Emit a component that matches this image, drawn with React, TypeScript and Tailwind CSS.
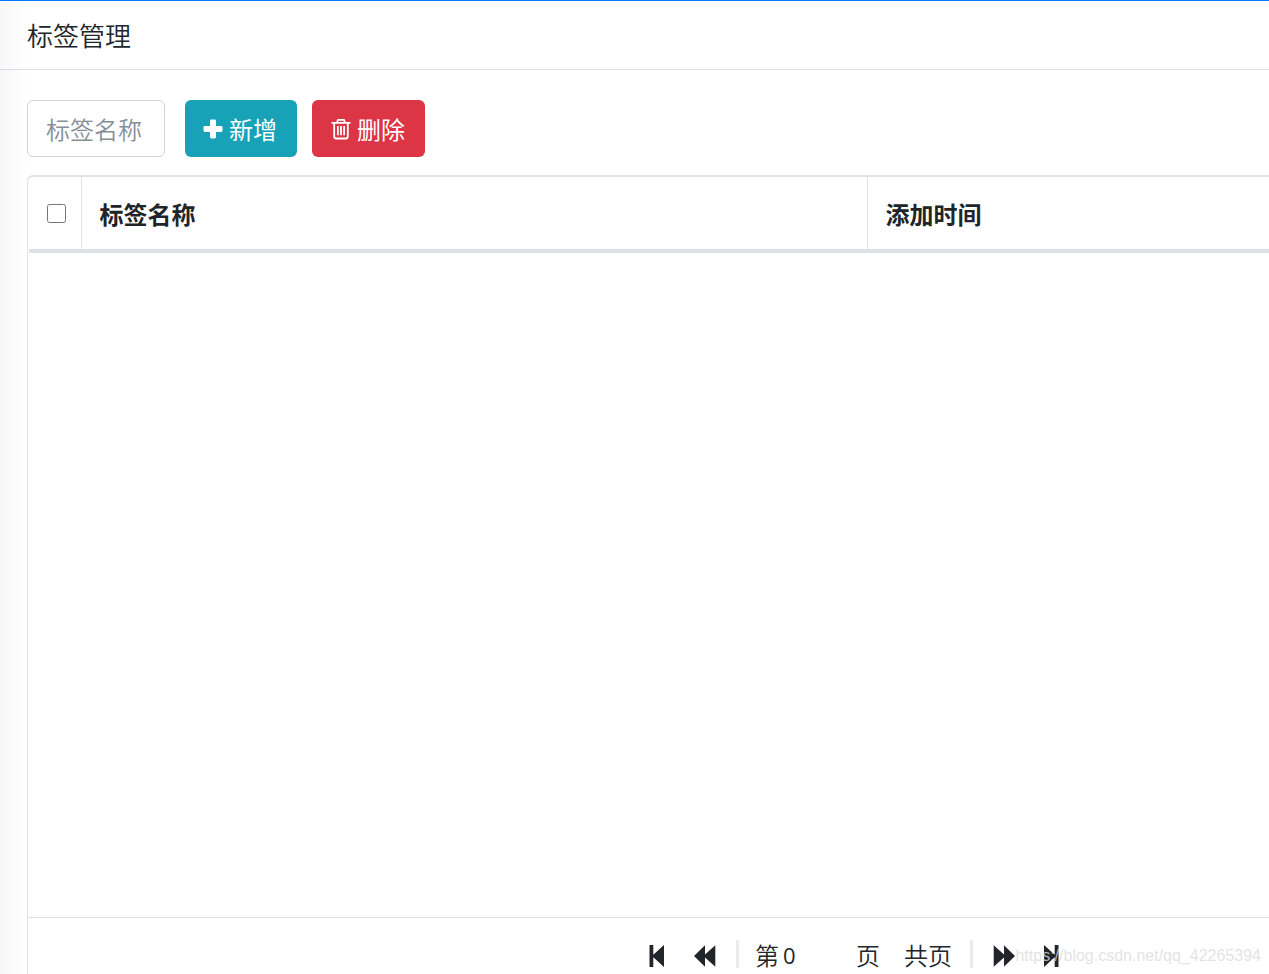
import React, { useState } from 'react';

const StepIcon: React.FC<{ flip?: boolean }> = ({ flip }) => (
  <svg width="16" height="22" viewBox="0 0 16 22" fill="currentColor" className={flip ? 'rotate-180' : ''}>
    <path d="M0.5 0h3.8v9.8L15 0v22L4.3 12.2V22H0.5z" />
  </svg>
);

const FastIcon: React.FC<{ flip?: boolean }> = ({ flip }) => (
  <svg width="22" height="22" viewBox="0 0 22 22" fill="currentColor" className={flip ? 'rotate-180' : ''}>
    <path d="M0 11 11 0.3v9.3L21.3 0.3v21.4L11 12.4v9.3z" />
  </svg>
);

const PlusIcon = () => (
  <svg width="20" height="20" viewBox="0 0 20 20" fill="currentColor">
    <path d="M8.4 0.5h3.2a1.4 1.4 0 0 1 1.4 1.4V7h5.1a1.4 1.4 0 0 1 1.4 1.4v3.2a1.4 1.4 0 0 1-1.4 1.4H13v5.1a1.4 1.4 0 0 1-1.4 1.4H8.4A1.4 1.4 0 0 1 7 18.1V13H1.9a1.4 1.4 0 0 1-1.4-1.4V8.4A1.4 1.4 0 0 1 1.9 7H7V1.9A1.4 1.4 0 0 1 8.4 0.5z" />
  </svg>
);

const TrashIcon = () => (
  <svg width="20" height="22" viewBox="0 0 20 22" fill="none" stroke="currentColor" strokeWidth="1.8">
    <path d="M0.5 4.9h19M6 4.5 7 1.8h6l1 2.7M3.2 5v13.2q0 2.3 2 2.3h9.6q2 0 2-2.3V5M6.9 8v9.3M10 8v9.3M13.1 8v9.3" />
  </svg>
);

const App: React.FC = () => {
  const [keyword, setKeyword] = useState('');
  const [page, setPage] = useState('0');
  const [checked, setChecked] = useState(false);

  return (
    <div className="relative flex h-screen flex-col overflow-hidden border-t border-[#007bff] bg-white font-['Noto_Sans','Noto_Sans_CJK_SC',sans-serif] text-2xl text-[#212529]">
      <div className="pointer-events-none absolute inset-y-0 left-0 w-7 bg-linear-to-r from-black/3 to-transparent" />

      <header className="border-b border-[#dee2e6] px-[27px] pt-[17px] pb-[15px]">
        <h1 className="text-[26px] leading-9 font-[350]">标签管理</h1>
      </header>

      <main className="flex flex-1 flex-col pt-[30px] pl-[27px]">
        <div className="mb-[18px] flex items-center">
          <input
            type="text"
            aria-label="标签名称"
            placeholder="标签名称"
            value={keyword}
            onChange={(e) => setKeyword(e.target.value)}
            className="mr-5 h-[57px] w-[138px] rounded-md border border-[#ced4da] px-[18px] pt-0.5 font-[350] placeholder:text-[#868e96]"
          />
          <button className="mr-[15px] flex h-[57px] items-center gap-[6px] rounded-md bg-[#17a2b8] pr-5 pl-[18px] text-white">
            <PlusIcon />
            <span className="pt-0.5">新增</span>
          </button>
          <button className="flex h-[57px] items-center gap-[6px] rounded-md bg-[#dc3545] pr-5 pl-[19px] text-white">
            <TrashIcon />
            <span className="pt-0.5">删除</span>
          </button>
        </div>

        {/* The grid is wider than the view and runs off its right side */}
        <section className="flex w-[133%] flex-1 flex-col rounded-t-md border-t-2 border-l border-[#dee2e6] pl-px">
          <table className="w-full table-fixed">
            <thead>
              <tr className="h-[74px] border-b-4 border-[#dee2e6] text-left">
                <th className="w-[52px] border-r border-[#dee2e6] pl-[18px]">
                  <input
                    type="checkbox"
                    aria-label="全选"
                    checked={checked}
                    onChange={(e) => setChecked(e.target.checked)}
                    className="block size-[19px]"
                  />
                </th>
                <th className="w-[786px] border-r border-[#dee2e6] px-[18px] pt-1 font-bold">标签名称</th>
                <th className="px-[18px] pt-1 font-bold">添加时间</th>
              </tr>
            </thead>
            <tbody />
          </table>
          <div className="flex-1" />
          <nav className="flex h-[57px] items-center justify-center border-t border-[#dddddd] pt-5 font-[350]">
            <button aria-label="首页" className="mr-[29px]">
              <StepIcon />
            </button>
            <button aria-label="上一页" className="mr-5">
              <FastIcon />
            </button>
            <span className="mb-1 h-7 w-[3px] bg-[#ebebeb]" />
            <label className="ml-4 flex items-center gap-1">
              第
              <input
                value={page}
                onChange={(e) => setPage(e.target.value)}
                className="w-[69px] font-['Open_Sans','Noto_Sans',sans-serif] text-[22px] font-normal"
              />
              页
            </label>
            <span className="mx-[18px] pl-[6px]">共页</span>
            <span className="mb-1 h-7 w-[3px] bg-[#ebebeb]" />
            <button aria-label="下一页" className="ml-5">
              <FastIcon flip />
            </button>
            <button aria-label="末页" className="ml-7">
              <StepIcon flip />
            </button>
          </nav>
        </section>
      </main>

      <span className="pointer-events-none absolute right-2 bottom-1.5 font-['Liberation_Sans',sans-serif] text-base text-[#dcdcdc]/80">
        https://blog.csdn.net/qq_42265394
      </span>
    </div>
  );
};

export default App;
